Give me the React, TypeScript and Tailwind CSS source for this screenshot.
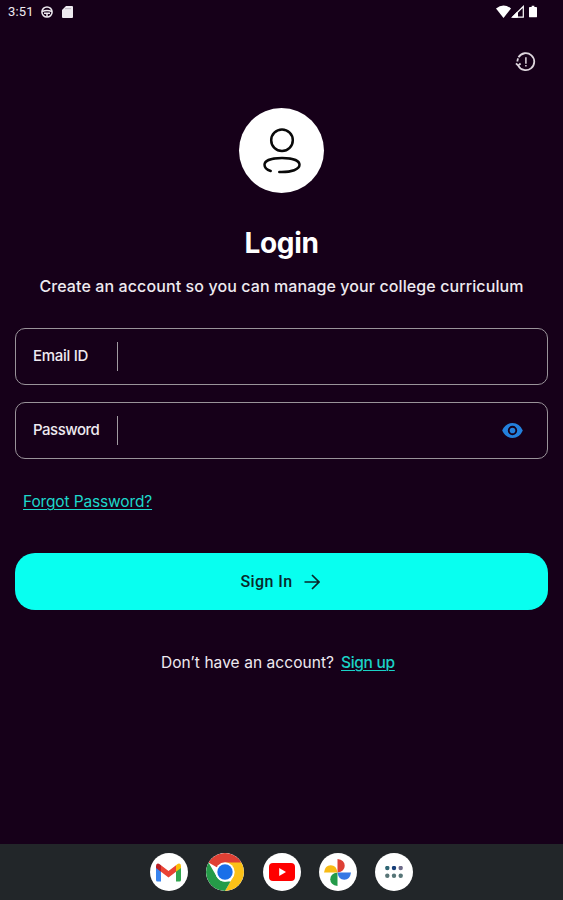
import type { ReactNode } from "react";

function StatusBar() {
  return (
    <header className="flex h-6 items-center justify-between pr-[26px] pl-2 text-[#eeeaf0]">
      <div className="flex items-center">
        <span className="w-[33px] font-['Roboto',sans-serif] text-[13px] leading-6 tracking-[0.2px] whitespace-nowrap">3:51</span>
        <svg className="h-3 w-3" viewBox="0 0 12 12" fill="none" stroke="currentColor" strokeWidth="1.5">
          <circle cx="6" cy="6" r="5.1" />
          <path d="M1 5.5q5-2 10 0M3 7.3h6M6 7.5v3.3" />
        </svg>
        <svg className="ml-[9px] h-3 w-[11px]" viewBox="0 0 11 12">
          <path d="M4 0h6q1 0 1 1v10q0 1-1 1H1q-1 0-1-1V4Z" fill="currentColor" />
          <path d="M4 2v1.2M6 2v1.2M8 2v1.2" stroke="#60576a" strokeWidth=".6" />
        </svg>
      </div>
      <div className="-mt-0.5 flex items-center text-white">
        <svg className="h-[13px] w-[15px]" viewBox="0 0 15 13" fill="currentColor"><path d="M0 3.4Q7.5-2.2 15 3.4L7.5 13Z" /></svg>
        <svg className="h-[13px] w-[13px]" viewBox="0 0 13 13" fill="none" stroke="currentColor"><path d="M1.5 12.2h10.8V1.5Z" strokeWidth="1.2" /><path d="M1.5 12.2h5V7Z" fill="currentColor" /></svg>
        <svg className="ml-[5px] h-[13px] w-[8px]" viewBox="0 0 9 13" fill="currentColor"><path d="M3 0h3v1.3h2q1 0 1 1V12q0 1-1 1H1q-1 0-1-1V2.3q0-1 1-1h2Z" /></svg>
      </div>
    </header>
  );
}

function Field({ label, tracking, children }: { label: string; tracking: string; children?: ReactNode }) {
  return (
    <div className="flex h-[57px] items-center rounded-[10px] border border-[#999399] pr-6 pl-[17px]">
      <span className={`w-[84px] text-[15px] font-medium whitespace-nowrap ${tracking}`}>{label}</span>
      <span className="h-[29px] w-px bg-[#a09aa0]" />
      <span className="flex-1" />
      {children}
    </div>
  );
}

function DockIcon({ children }: { children: ReactNode }) {
  return <div className="flex h-[38px] w-[38px] items-center justify-center overflow-hidden rounded-full bg-white">{children}</div>;
}

function Dock() {
  return (
    <footer className="flex h-14 items-center justify-center gap-[18.3px] bg-[#222629]">
      <DockIcon>
        <svg className="h-[19px] w-[25px]" viewBox="0 0 25 19">
          <path d="M0 3v14q0 1.5 1.5 1.5H5V7Z" fill="#3984ee" />
          <path d="M20 7v11.5h3.5q1.5 0 1.5-1.5V3Z" fill="#32a650" />
          <path d="M20 2.2 22 .7q3-1 3 2.3v2l-5 3.8Z" fill="#fbbc05" />
          <path d="M0 5V3Q0-.3 3 .7l2 1.5v6.6Z" fill="#b91f25" />
          <path d="M5 2.2l7.5 5.7L20 2.2v6.6l-7.5 5.7L5 8.8Z" fill="#ea4335" />
        </svg>
      </DockIcon>
      <DockIcon>
        <svg className="h-[38px] w-[38px]" viewBox="0 0 38 38">
          <path d="M19 19 2.55 9.5A19 19 0 0 1 35.45 9.5Z" fill="#df4034" />
          <path d="M19 9.5h16.45A19 19 0 0 1 19 38l8.2-14.3Z" fill="#fbc117" />
          <path d="M2.55 9.5 10.8 23.7Q14 29 19 28.5h5.5L19 38A19 19 0 0 1 2.55 9.5Z" fill="#259b48" />
          <circle cx="19" cy="19" r="9.7" fill="white" />
          <circle cx="19" cy="19" r="7.7" fill="#1a6fe8" />
        </svg>
      </DockIcon>
      <DockIcon>
        <svg className="h-[18px] w-[26px]" viewBox="0 0 26 18"><rect width="26" height="18" rx="4" fill="#ff0000" /><path d="m10.2 5 6.8 4-6.8 4Z" fill="white" /></svg>
      </DockIcon>
      <DockIcon>
        <svg className="h-[27px] w-[27px]" viewBox="0 0 28 28">
          <path d="M14 0q7.5 1 7.5 7T14 14Z" fill="#dd4035" />
          <path d="M28 14q-1 7.5-7 7.5T14 14Z" fill="#3478e4" />
          <path d="M14 28q-7.5-1-7.5-7t7.5-7Z" fill="#249b49" />
          <path d="M0 14q1-7.5 7-7.5t7 7.5Z" fill="#f8bb15" />
        </svg>
      </DockIcon>
      <DockIcon>
        <svg className="h-3 w-[18px]" viewBox="0 0 18 12">
          <circle cx="2.3" cy="2" r="2.2" fill="#2f6674" /><circle cx="9" cy="2" r="2.2" fill="#173f79" /><circle cx="15.7" cy="2" r="2.2" fill="#6e6b89" />
          <circle cx="2.3" cy="9.7" r="2.2" fill="#587577" /><circle cx="9" cy="9.7" r="2.2" fill="#567577" /><circle cx="15.7" cy="9.7" r="2.2" fill="#567577" />
        </svg>
      </DockIcon>
    </footer>
  );
}

export default function App() {
  return (
    <div className="flex h-[900px] w-[563px] flex-col overflow-hidden bg-[#160019] font-['Inter','DM_Sans',sans-serif] text-[#eeeaf0]">
      <StatusBar />
      <main className="flex flex-1 flex-col px-[15px]">
        <div className="flex h-[84px] justify-end pt-7 pr-3">
          <svg className="h-5 w-[21px]" viewBox="0 0 21 20" fill="none" stroke="#ddd5dd" strokeWidth="1.8">
            <path d="M3.2 13.6A8.5 8.5 0 1 0 3.5 5.2M2.4 9.5q0-1.7.8-3.2M1 11.3l2.2 2.3 2.4-2.1" />
            <path d="M10.9 5.3v6.4M10.9 13v1.5" strokeWidth="1.5" />
          </svg>
        </div>
        <div className="flex h-[85px] w-[85px] items-center justify-center self-center rounded-full bg-white">
          <svg className="h-12 w-[38px]" viewBox="0 0 38 48" fill="none" stroke="#090909" strokeWidth="2.5" strokeLinecap="round">
            <circle cx="19" cy="13.2" r="10.8" />
            <path d="M7.7 44C3.5 42.8 1.5 40.5 1.5 37.8 1.5 33.3 9 31 19 31S36.5 33.3 36.5 37.8 29 45.4 16.3 45" />
          </svg>
        </div>
        <h1 className="mt-8 text-center text-[28px] leading-9 font-bold tracking-[-0.3px] text-white">Login</h1>
        <p className="mt-[13px] text-center text-[16px] leading-6 font-medium tracking-[0.1px] whitespace-nowrap">Create an account so you can manage your college curriculum</p>
        <div className="mt-[30px] flex flex-col gap-[17px]">
          <Field label="Email ID" tracking="tracking-[-0.3px]" />
          <Field label="Password" tracking="tracking-[-0.5px]">
            <svg className="h-[15px] w-[21px]" viewBox="0 0 22 16"><path fillRule="evenodd" d="M0 8Q3.5 0 11 0t11 8q-3.5 8-11 8T0 8Zm11-5a5 5 0 1 0 0 10 5 5 0 0 0 0-10Z" fill="#2380dc" /><circle cx="11" cy="8" r="3" fill="#2380dc" /></svg>
          </Field>
        </div>
        <a className="mt-[31px] ml-2 self-start text-[15.5px] leading-6 tracking-[-0.14px] whitespace-nowrap text-[#1dd8cb] underline decoration-1 underline-offset-2">Forgot Password?</a>
        <button className="mt-[39px] flex h-[57px] shrink-0 items-center justify-center rounded-[20px] bg-[#08fff0] font-['Roboto',sans-serif] text-[16px] font-medium text-[#08272b]">
          <span className="tracking-[0.4px]">Sign In</span>
          <svg className="mr-0.5 ml-3 h-4 w-4" viewBox="0 0 16 16" fill="none" stroke="currentColor" strokeWidth="1.7"><path d="M.5 8h14M8 1l7 7-7 7" /></svg>
        </button>
        <div className="mt-[41px] flex items-center pl-[146px] text-[15.5px] leading-6 whitespace-nowrap">
          <span className="w-[180px] tracking-[0.06px]">Don’t have an account?</span>
          <a className="font-medium tracking-[-0.3px] text-[#1bd2c7] underline decoration-1 underline-offset-2">Sign up</a>
        </div>
      </main>
      <Dock />
    </div>
  );
}
